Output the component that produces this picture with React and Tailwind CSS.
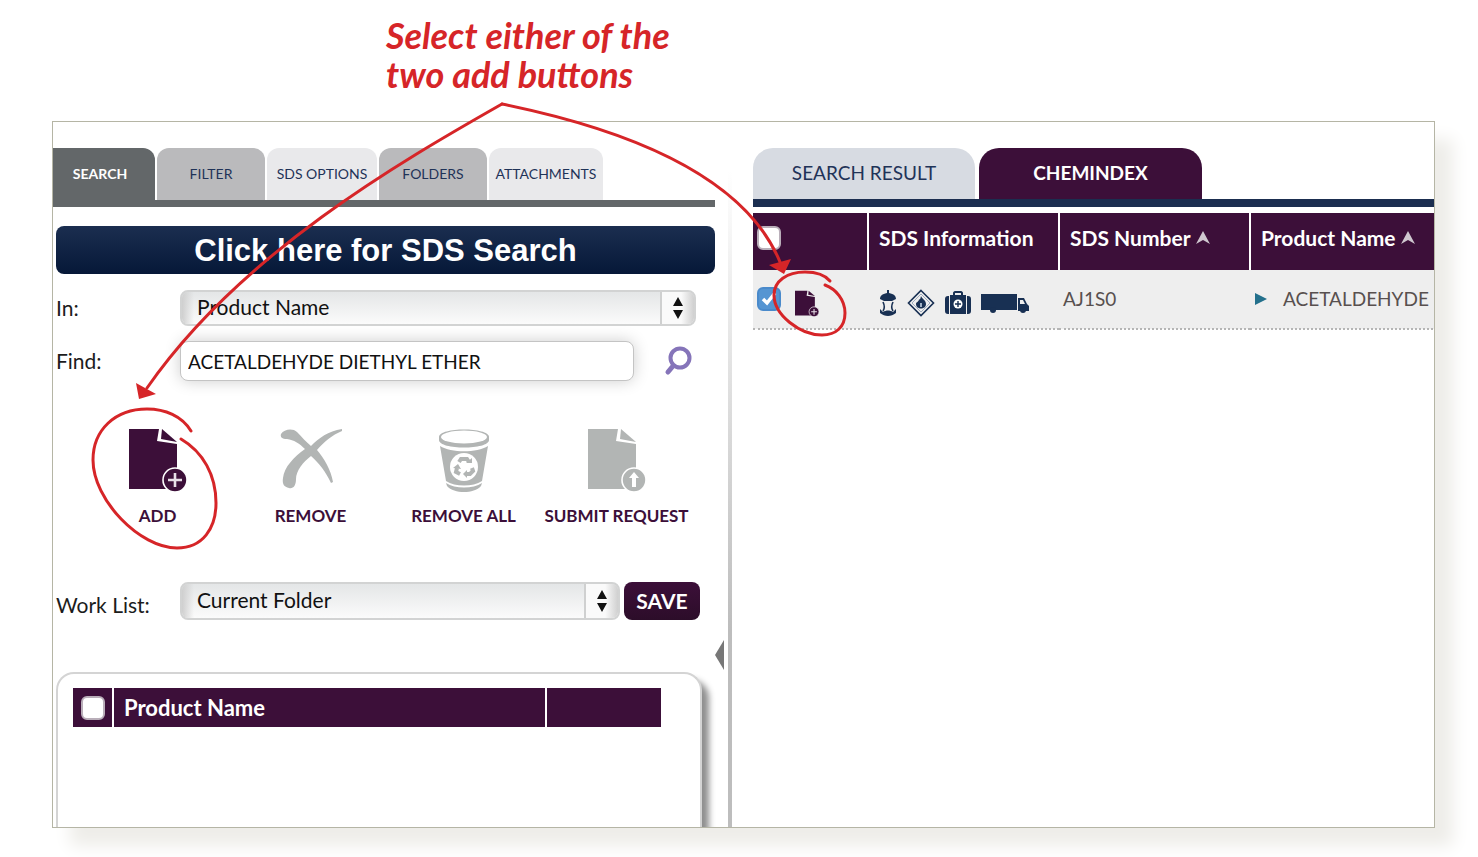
import { useState } from 'react';

const LEFT_TABS = [
  { name: 'SEARCH', cls: 'w-[102px] bg-[#636769] text-white font-bold pr-2' },
  { name: 'FILTER', cls: 'w-[108px] bg-[#bababc] text-[#1f3358]' },
  { name: 'SDS OPTIONS', cls: 'w-[110px] bg-[#e9e9eb] text-[#1f3358]' },
  { name: 'FOLDERS', cls: 'w-[108px] bg-[#bababc] text-[#1f3358]' },
  { name: 'ATTACHMENTS', cls: 'w-[114px] bg-[#e9e9eb] text-[#1f3358]' },
];

const PageIcon = ({ children, className, fill }) => (
  <svg viewBox="0 0 58 64" className={className} fill={fill}>
    <path d="M0 1H30L28 13L48 16V61H0Z" />
    <path d="M33 1L48 14L32 11Z" />
    <circle cx="46" cy="52" r="12" stroke="white" strokeWidth="1.6" />
    {children}
  </svg>
);

const AddIcon = ({ className }) => (
  <PageIcon className={className} fill="#3c0f39">
    <path d="M39 52H53M46 45V59" stroke="#e8dfe8" strokeWidth="2.6" />
  </PageIcon>
);

const SubmitIcon = () => (
  <PageIcon className="w-[58px] h-16" fill="#b2b5b4">
    <path d="M46 44L51 50H48V59H44V50H41Z" fill="white" />
  </PageIcon>
);

const RemoveIcon = () => (
  <svg viewBox="0 0 64 64" className="w-16 h-16" fill="#b2b5b4">
    <path d="M2 6C5 1 14 0 18 4C23 9 27 14 32 18C40 10 49 3 63 1V3C53 7 45 14 38 22C45 30 52 42 54 54L52 55C47 44 40 35 32 28C24 34 17 43 17 51C17 58 14 61 10 60C5 59 3 56 4 50C5 39 15 29 26 21C20 15 15 12 8 11C3 11 1 9 2 6Z" />
  </svg>
);

const TrashIcon = () => (
  <svg viewBox="0 0 50 64" className="w-[50px] h-16">
    <path d="M0 9C0 -1 50 -1 50 9V12C50 22 0 22 0 12Z" fill="#b2b5b4" />
    <ellipse cx="25" cy="9" rx="23" ry="6.5" fill="white" />
    <path d="M1 18C12 25 38 25 49 18L43 53C34 59 16 59 7 53Z" fill="#b2b5b4" />
    <path d="M7 55C16 61 34 61 43 55L42 58C35 66 15 66 8 58Z" fill="#b2b5b4" />
    <circle cx="25" cy="39" r="14" fill="white" />
    <g fill="none" stroke="#b2b5b4" strokeWidth="4">
      <path d="M20 34L22 31H28L30 34" />
      <path d="M33 40L34 43L31 46H27" />
      <path d="M21 46L17 44L18 40" />
    </g>
    <path d="M27 35H33V30ZM28 42V50L24 46ZM14 40L19 36L22 41Z" fill="#b2b5b4" />
  </svg>
);

const ACTIONS = [
  { label: 'ADD', icon: <AddIcon className="w-[58px] h-16" /> },
  { label: 'REMOVE', icon: <RemoveIcon /> },
  { label: 'REMOVE ALL', icon: <TrashIcon /> },
  { label: 'SUBMIT REQUEST', icon: <SubmitIcon /> },
];

const MacSelect = ({ id, options, className }) => (
  <div className={`relative rounded-lg border-2 border-[#d2d3d3] bg-linear-to-b from-[#e4e6e7] to-[#fbfbfb] overflow-hidden ${className}`}>
    <select id={id} className="appearance-none w-full h-full pl-[15px] pr-10 pb-[2px] text-[21px] leading-6 text-[#111] bg-linear-to-r from-[#cfcfcf] to-transparent to-[12px] outline-none">
      {options.map(o => <option key={o}>{o}</option>)}
    </select>
    <div className="absolute right-0 top-0 h-full w-[34px] border-l-2 border-[#cfd0d0] bg-linear-to-r from-[#fafafa] from-60% to-[#d0d0d0] flex items-center justify-center pointer-events-none">
      <svg viewBox="0 0 12 22" className="w-3 h-[22px]">
        <path d="M6 0L11 9H1ZM6 22L1 13H11Z" fill="#111" />
      </svg>
    </div>
  </div>
);

const Check = ({ label, checked, onChange }) => (
  <span className="relative block w-6 h-6">
    <input
      type="checkbox"
      aria-label={label}
      checked={checked}
      onChange={onChange}
      className="appearance-none block w-6 h-6 rounded-md border-2 border-[#b9aeb9] bg-white checked:border-[#4a8acb] checked:bg-[#5595d2]"
    />
    {checked && (
      <svg viewBox="0 0 24 24" className="absolute inset-0 w-6 h-6 pointer-events-none" fill="none" stroke="white" strokeWidth="3.5">
        <path d="M6 12L10 16L18 6" />
      </svg>
    )}
  </span>
);

const SortIcon = () => (
  <svg viewBox="0 0 16 14" className="w-4 h-[14px] ml-1" fill="#cfc7cf">
    <path d="M8 0L15 13L8 9L1 13Z" />
  </svg>
);

const HazardIcons = () => (
  <div className="flex items-center gap-[10px]">
    <svg viewBox="0 0 18 26" className="w-[18px] h-[26px]" fill="#183053">
      <path d="M8 0H10V3C15 4 17 6 17 9L13 11H5L1 9C1 6 3 4 8 3Z" />
      <path d="M4 12C6 16 6 18 4 21M14 12C12 16 12 18 14 21" fill="none" stroke="#183053" strokeWidth="1.6" />
      <path d="M1 19L4 22C7 20 11 20 14 22L17 19V23C12 27 6 27 1 23Z" />
    </svg>
    <svg viewBox="0 0 28 28" className="w-7 h-7" fill="none" stroke="#183053">
      <path d="M14 1.5L26.5 14L14 26.5L1.5 14Z" strokeWidth="1.6" />
      <path d="M14 5L23 14L14 23L5 14Z" stroke="#8b9bb0" strokeWidth="0.8" />
      <path d="M14 7C15 10 19 11 19 15C19 21 9 21 9 15C9 13 12 13 12 10C13 11 13 11 14 7Z" fill="#183053" stroke="none" />
      <path d="M14 14V18" stroke="#9fb0c4" strokeWidth="2" />
    </svg>
    <svg viewBox="0 0 26 24" className="w-[26px] h-6" fill="#183053">
      <path d="M8 5V2C8 1 9 0 10 0H16C17 0 18 1 18 2V5H16V2H10V5Z" />
      <path d="M3 5H4V23H3C1 23 0 22 0 20V8C0 6 1 5 3 5ZM23 5H22V23H23C25 23 26 22 26 20V8C26 6 25 5 23 5Z" />
      <rect x="5" y="4" width="16" height="19" />
      <circle cx="13" cy="13" r="4.5" fill="white" />
      <path d="M10 13H16M13 10V16" stroke="#183053" strokeWidth="1.4" />
    </svg>
    <svg viewBox="0 0 48 20" className="w-12 h-5" fill="#183053">
      <path d="M0 1H36V17H0Z" />
      <path d="M37 5H43L46 11L48 13V18H37Z" />
      <path d="M39 7H42L44 11H39Z" fill="#eeeeee" />
      <circle cx="12" cy="17" r="3" />
      <circle cx="42" cy="17" r="3" />
    </svg>
  </div>
);

const Annotation = () => (
  <svg viewBox="0 0 1478 857" className="absolute left-0 top-0 w-[1478px] h-[857px] max-w-none pointer-events-none" fill="none" stroke="#d62528" strokeWidth="3" strokeLinecap="round">
    <path d="M502 104C400 162 240 254 147 388" />
    <path d="M502 104C600 124 740 165 780 262" />
    <path d="M136 383L156 394L139 399ZM769 265L791 259L784 274Z" fill="#d62528" stroke="none" />
    <path d="M191 431C182 416 165 409 147 409C115 409 93 430 93 460C93 500 140 548 177 548C203 548 216 528 216 503C216 475 203 452 181 439" />
    <path d="M830 281C825 275 815 272 805 272C787 272 774 281 774 295C774 315 800 335 822 335C836 335 845 327 845 313C845 300 836 289 825 285" />
  </svg>
);

const SearchPanel = () => {
  const [allChecked, setAllChecked] = useState(false);

  return (
    <section className="w-[662px] shrink-0 pt-[26px] flex flex-col">
      <nav className="flex gap-[2px] border-b-[7px] border-[#636769]">
        {LEFT_TABS.map(t => (
          <button key={t.name} type="button" className={`h-[52px] rounded-t-xl first:rounded-tl-none text-sm whitespace-nowrap ${t.cls}`}>
            {t.name}
          </button>
        ))}
      </nav>

      <button type="button" className="mt-[19px] ml-[3px] h-12 rounded-lg bg-linear-to-b from-[#1b2e50] to-[#061838] font-['Liberation_Sans',sans-serif] font-bold text-[31px] leading-none text-white">
        Click here for SDS Search
      </button>

      <form className="pl-[3px]" onSubmit={e => e.preventDefault()}>
        <div className="mt-4 flex items-center">
          <label htmlFor="in" className="w-[124px] text-[21px] leading-6">In:</label>
          <MacSelect id="in" options={['Product Name', 'SDS Number']} className="w-[516px] h-9" />
        </div>
        <div className="mt-[15px] flex items-center">
          <label htmlFor="find" className="w-[124px] text-[21px] leading-6">Find:</label>
          <input id="find" type="text" defaultValue="ACETALDEHYDE DIETHYL ETHER" className="w-[454px] h-10 rounded-lg border border-[#c4c4c4] bg-white pl-[7px] text-[19px] text-[#111] shadow-[0_0_16px_rgba(0,0,0,0.2)] outline-none" />
          <button type="button" aria-label="Search" className="ml-[30px]">
            <svg viewBox="0 0 28 30" className="w-7 h-[30px]" fill="none" stroke="#8574b9" strokeLinecap="round">
              <circle cx="16" cy="12" r="9.5" strokeWidth="4" />
              <path d="M9 20L4 26" strokeWidth="5" />
            </svg>
          </button>
        </div>

        <div className="mt-[47px] ml-[25px] w-[612px] grid grid-cols-4">
          {ACTIONS.map(a => (
            <button key={a.label} type="button" className="flex flex-col items-center gap-3 text-[17px] leading-6 font-bold text-[#3c0f39] whitespace-nowrap">
              {a.icon}
              {a.label}
            </button>
          ))}
        </div>

        <div className="mt-[54px] flex items-center">
          <label htmlFor="worklist" className="w-[124px] pt-2 text-[21px] leading-6">Work List:</label>
          <MacSelect id="worklist" options={['Current Folder', 'Archive']} className="w-[440px] h-[38px]" />
          <button type="button" className="ml-1 w-[76px] h-[38px] rounded-lg bg-linear-to-b from-[#3c0f39] to-[#2c0d29] text-[21px] font-bold text-white">SAVE</button>
        </div>
      </form>

      <div className="mt-[52px] ml-[3px] mr-[13px] min-h-32 flex-1 rounded-t-[18px] border-2 border-b-0 border-[#d4d4d4] bg-white pt-[14px] pl-[15px] pr-[39px] shadow-[7px_8px_6px_#8f8f8f]">
        <table className="w-full table-fixed">
          <thead>
            <tr className="bg-[#3c0f39] text-left text-[22px] leading-6 text-white">
              <th className="w-10 h-[39px] pl-2 border-r-2 border-white">
                <Check label="Select all products" checked={allChecked} onChange={() => setAllChecked(!allChecked)} />
              </th>
              <th className="pl-[10px] border-r-2 border-white">Product Name</th>
              <th className="w-[115px]"></th>
            </tr>
          </thead>
        </table>
      </div>
    </section>
  );
};

const ResultsPanel = () => {
  const [all, setAll] = useState(false);
  const [selected, setSelected] = useState(true);

  return (
    <section className="flex-1 min-w-0 pt-[26px] overflow-hidden">
      <nav className="flex gap-1 border-b-8 border-[#1b2e50] text-[19px]">
        <button type="button" className="w-[222px] h-[51px] rounded-t-[20px] bg-[#d7dbe2] text-[#1f3358]">SEARCH RESULT</button>
        <button type="button" className="w-[223px] h-[51px] rounded-t-[20px] bg-[#3c0f39] font-bold text-white">CHEMINDEX</button>
      </nav>

      <table className="mt-[6px] w-full min-w-[740px] table-fixed text-left text-[19px] leading-6 whitespace-nowrap">
        <thead>
          <tr className="h-[57px] bg-[#3c0f39] text-[21px] text-white">
            <th className="w-[115px] pl-1 pb-2 border-r-2 border-white">
              <Check label="Select all" checked={all} onChange={() => setAll(!all)} />
            </th>
            <th className="w-[191px] pl-[10px] pb-2 border-r-2 border-white">SDS Information</th>
            <th className="w-[191px] pl-[10px] pb-2 border-r-2 border-white">
              <span className="flex items-center">SDS Number<SortIcon /></span>
            </th>
            <th className="pl-[10px] pb-2">
              <span className="flex items-center">Product Name<SortIcon /></span>
            </th>
          </tr>
        </thead>
        <tbody>
          <tr className="h-[59px] bg-[#eeeeee] text-[#58504f] border-b-2 border-dotted border-[#b5b5b5]">
            <td className="pl-1">
              <div className="flex items-center">
                <Check label="Select AJ1S0" checked={selected} onChange={() => setSelected(!selected)} />
                <button type="button" aria-label="Add AJ1S0" className="ml-[14px] mt-2">
                  <AddIcon className="w-6 h-[27px]" />
                </button>
              </div>
            </td>
            <td className="pl-[11px] pt-2"><HazardIcons /></td>
            <td className="pl-1">AJ1S0</td>
            <td className="pl-[5px]">
              <span className="flex items-center">
                <svg viewBox="0 0 12 12" className="w-3 h-3 mr-4 shrink-0" fill="#23708c">
                  <path d="M0 0L12 6L0 12Z" />
                </svg>
                ACETALDEHYDE DIETHYL ETHER
              </span>
            </td>
          </tr>
        </tbody>
      </table>
    </section>
  );
};

const App = () => (
  <div className="relative min-h-screen flex flex-col bg-white pl-[52px] pr-[43px] pb-[29px] font-['Lato',sans-serif] text-[#1c1c1c] overflow-hidden">
    <header className="h-[121px] pt-4 pl-[334px]">
      <h1 className="italic font-bold text-[36px] leading-[39px] text-[#d62528]">
        Select either of the
        <br />
        two add buttons
      </h1>
    </header>

    <main className="flex-1 flex border border-[#b5b5a5] bg-white shadow-[18px_18px_16px_#eeede9] overflow-hidden">
      <SearchPanel />
      <div className="w-[38px] shrink-0 flex">
        <button type="button" aria-label="Collapse panel" className="w-[13px] pt-[360px]">
          <svg viewBox="0 0 9 30" className="w-[9px] h-[30px]" fill="#777777">
            <path d="M9 0V30L0 15Z" />
          </svg>
        </button>
        <div className="mt-12 w-1 bg-linear-to-b from-white to-[#bdbdbd] to-70%"></div>
      </div>
      <ResultsPanel />
    </main>

    <Annotation />
  </div>
);

export default App;
